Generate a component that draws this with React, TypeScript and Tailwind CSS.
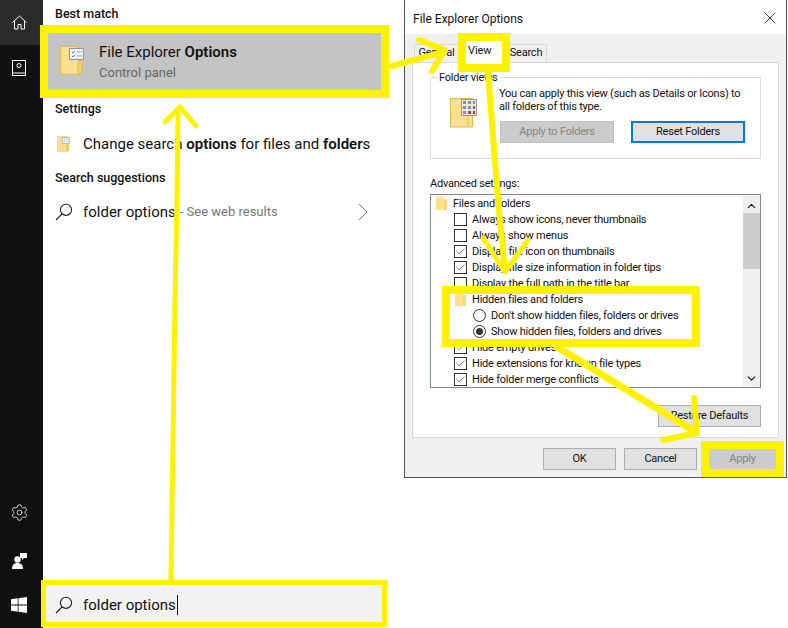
import React from 'react';
import { Check, ChevronDown, ChevronUp, Settings, X } from 'lucide-react';

const FolderTasks = ({ size = 24 }: { size?: number }) => (
  <svg width={size} height={size * 1.2} viewBox="0 0 24 29">
    <path d="M0.5 0.5h18v28h-18z" fill="#fbe08f" stroke="#e3b94f" />
    <path d="M18 17l4-3v14h-4z" fill="#f4cf6c" stroke="#e3b94f" />
    <rect x="9.5" y="2.5" width="14" height="11" fill="#f4f6f8" stroke="#8a929c" />
    <path d="M12 6l1 1 2-2M12 10l1 1 2-2" stroke="#2f7fd0" fill="none" />
    <path d="M17 6h5M17 10h5" stroke="#9aa2aa" />
  </svg>
);

const FolderGrid = () => (
  <svg width="27" height="30" viewBox="0 0 27 30">
    <path d="M0.5 0.5h22v28.5h-22z" fill="#fbe08f" stroke="#e3b94f" />
    <path d="M18 1v28" stroke="#e3b94f" />
    <rect x="11.5" y="1.5" width="15" height="16" fill="#e8e8e8" stroke="#9a9a9a" />
    <path d="M13 3h3v3h-3zM18 3h3v3h-3zM23 3h2v3h-2zM13 8h3v3h-3zM18 8h3v3h-3zM13 13h3v3h-3z" fill="#8c8c9c" />
    <path d="M23 8h2v3h-2zM18 13h3v3h-3z" fill="#a05040" />
    <path d="M23 13h2v3h-2z" fill="#b03030" />
  </svg>
);

const SmallFolder = () => (
  <svg width="11" height="13" viewBox="0 0 11 13">
    <path d="M0 0h7l1 1v1h3v11H0z" fill="#fbe08f" />
    <path d="M8 2v11h3V2z" fill="#f7d67e" />
  </svg>
);

const SearchGlyph = () => (
  <svg width="18" height="18" viewBox="0 0 18 18" fill="none" stroke="#222" strokeWidth="1.1">
    <circle cx="11" cy="6.8" r="5.6" />
    <path d="M7 11L1 17" />
  </svg>
);

const Btn = ({ label, w, disabled = false }: { label: string; w: string; disabled?: boolean }) => (
  <div className={`${w} h-[22px] flex items-center justify-center border ${disabled ? 'bg-[#cccccc] border-[#bfbfbf] text-[#838383]' : 'bg-[#e1e1e1] border-[#adadad] text-[#111]'}`}>
    {label}
  </div>
);

const Box = ({ on, label }: { on: boolean; label: string }) => (
  <div className="h-4 pl-[23px] flex items-center gap-[5px]">
    <div className="w-[13px] h-[13px] border border-[#333] bg-white flex items-center justify-center">
      {on && <Check size={11} strokeWidth={1.3} className="text-[#333]" />}
    </div>
    <span>{label}</span>
  </div>
);

const Radio = ({ on, label }: { on: boolean; label: string }) => (
  <div className="h-4 pl-[42px] flex items-center gap-[5px]">
    <div className="w-[13px] h-[13px] rounded-full border border-[#333] bg-white flex items-center justify-center">
      {on && <div className="w-[7px] h-[7px] rounded-full bg-[#333]" />}
    </div>
    <span>{label}</span>
  </div>
);

export default function App() {
  return (
    <div className="relative w-[788px] h-[628px] overflow-hidden flex bg-white text-[#111] font-['Roboto',sans-serif]">
      {/* Start menu rail */}
      <div className="w-[43px] h-full bg-[#111111] flex flex-col text-white shrink-0">
        <div className="h-[45px] bg-[#2b2b2b] flex items-center justify-center pr-[5px]">
          <svg width="15" height="15" viewBox="0 0 15 15" fill="none" stroke="#fff" strokeWidth="1">
            <path d="M0.5 7.5L7.5 1l7 6.5M2.5 6v8h3.5V9.5h3V14h3.5V6" />
          </svg>
        </div>
        <div className="h-[46px] flex items-center justify-center pr-[5px]">
          <svg width="14" height="16" viewBox="0 0 14 16" fill="none" stroke="#fff" strokeWidth="1">
            <path d="M0.5 0.5h13v15h-13zM0.5 13h13" />
            <circle cx="7" cy="5.5" r="2" />
          </svg>
        </div>
        <div className="flex-1" />
        <div className="h-[50px] flex items-center justify-center pr-[5px] pb-[4px]">
          <Settings size={19} strokeWidth={1} />
        </div>
        <div className="h-[44px] flex items-center justify-center pr-[5px]">
          <svg width="15" height="16" viewBox="0 0 15 16" fill="#fff">
            <circle cx="5.5" cy="6.5" r="3.2" />
            <path d="M0 16c0-4 2-6 5.5-6s5.5 2 5.5 6z" />
            <path d="M8 0h7v5h-3l-2 2V5H8z" />
          </svg>
        </div>
        <div className="h-[45px] flex items-center justify-center pr-[5px] pb-[1px]">
          <svg width="16" height="16" viewBox="0 0 16 16" fill="#fff">
            <path d="M0 2.3L6.7 1.3V7.5H0zM7.5 1.2L16 0V7.5H7.5zM0 8.4H6.7V14.7L0 13.7zM7.5 8.4H16V16L7.5 14.8z" />
          </svg>
        </div>
      </div>

      {/* Search results */}
      <div className="w-[361px] shrink-0 h-full flex flex-col">
        <div className="h-[25px] pl-[12px] pt-[6px] text-[12.5px] font-medium leading-4">Best match</div>
        <div className="relative z-10 -ml-[3px] w-[349px] h-[73px] border-[8px] border-[#fff200] bg-[#c4c4c4] flex items-center pl-[12px] gap-[15px]">
          <div className="-mt-[2px]"><FolderTasks /></div>
          <div className="flex flex-col pt-[2px]">
            <span className="text-[15px] leading-5">File Explorer <b className="font-semibold">Options</b></span>
            <span className="text-[13px] leading-[21px] text-[#666]">Control panel</span>
          </div>
        </div>
        <div className="h-[24px] pl-[12px] -mt-px flex items-center text-[12.5px] font-medium">Settings</div>
        <div className="h-[34px] pl-[14px] mt-[6px] flex items-center gap-[13px] text-[15px]">
          <FolderTasks size={13} />
          <span>Change search <b className="font-semibold">options</b> for files and <b className="font-semibold">folder</b>s</span>
        </div>
        <div className="h-[24px] pl-[12px] mt-[5px] flex items-center text-[12.5px] font-medium">Search suggestions</div>
        <div className="h-[34px] pl-[12px] mt-[5px] flex items-center gap-[10px] pr-[36px]">
          <SearchGlyph />
          <span className="text-[15px]">folder options</span>
          <span className="text-[13px] text-[#777] -ml-[6px]">- See web results</span>
          <svg width="10" height="18" viewBox="0 0 10 18" fill="none" stroke="#777" strokeWidth="1" className="ml-auto">
            <path d="M1 1l8 8-8 8" />
          </svg>
        </div>
        <div className="flex-1" />
        <div className="-ml-[2px] w-[346px] h-[47px] mb-[1px] border-[5px] border-[#fff200] bg-[#f2f2f2] flex items-center pl-[9px] pt-[3px] gap-[10px] text-[15px]">
          <SearchGlyph />
          <span className="border-r border-[#111] pr-px leading-5">folder options</span>
        </div>
      </div>

      {/* Dialog */}
      <div className="w-[383px] h-[478px] shrink-0 border-l border-r border-b border-[#555] bg-[#f0f0f0] flex flex-col text-[11px] tracking-[-0.22px]">
        <div className="h-[34px] bg-white flex items-center justify-between pl-[8px] pr-[6px] pt-[4px]">
          <span className="text-[12px] tracking-normal">File Explorer Options</span>
          <X size={20} strokeWidth={1} className="text-[#222] -mt-[2px]" />
        </div>
        <div className="mx-[7px] mt-[10px] flex h-[18px] pl-[2px]">
          <div className="w-[45px] bg-[#f0f0f0] border border-b-0 border-[#d9d9d9] flex items-center justify-center">General</div>
          <div className="w-[47px] bg-white" />
          <div className="w-[41px] bg-[#f0f0f0] border border-b-0 border-l-0 border-[#d9d9d9] flex items-center justify-center">Search</div>
        </div>
        <div className="mx-[7px] h-[377px] bg-white border border-[#d9d9d9] px-[17px] pt-[14px] flex flex-col">
          <fieldset className="h-[82px] border border-[#dcdcdc] relative">
            <legend className="ml-[6px] px-[2px] leading-[1px]">Folder views</legend>
            <div className="flex pl-[19px] pt-[10px] gap-[22px]">
              <div className="pt-[10px]"><FolderGrid /></div>
              <div className="flex flex-col">
                <p className="leading-[13px] -mt-[1px] whitespace-nowrap">You can apply this view (such as Details or Icons) to<br />all folders of this type.</p>
                <div className="flex gap-[17px] mt-[8px] ml-[1px]">
                  <Btn label="Apply to Folders" w="w-[114px]" disabled />
                  <div className="w-[114px] h-[22px] flex items-center justify-center border-2 border-[#0078d7] bg-[#e1e1e1]">Reset Folders</div>
                </div>
              </div>
            </div>
          </fieldset>
          <div className="mt-[17px] h-[18px] leading-4">Advanced settings:</div>
          <div className="h-[194px] border border-[#828790] flex overflow-hidden">
            <div className="flex-1 pt-px">
              <div className="h-4 pl-[5px] flex items-center gap-[6px]"><SmallFolder /><span>Files and folders</span></div>
              <Box on={false} label="Always show icons, never thumbnails" />
              <Box on={false} label="Always show menus" />
              <Box on label="Display file icon on thumbnails" />
              <Box on label="Display file size information in folder tips" />
              <Box on={false} label="Display the full path in the title bar" />
              <div className="h-4 pl-[24px] flex items-center gap-[6px]"><SmallFolder /><span>Hidden files and folders</span></div>
              <Radio on={false} label="Don't show hidden files, folders or drives" />
              <Radio on label="Show hidden files, folders and drives" />
              <Box on label="Hide empty drives" />
              <Box on label="Hide extensions for known file types" />
              <Box on label="Hide folder merge conflicts" />
            </div>
            <div className="w-[17px] bg-[#f0f0f0] flex flex-col items-center">
              <ChevronUp size={13} strokeWidth={2} className="mt-[4px] h-[14px]" />
              <div className="w-full h-[56px] bg-[#cdcdcd]" />
              <ChevronDown size={13} strokeWidth={2} className="mt-auto mb-[2px]" />
            </div>
          </div>
          <div className="mt-[17px] flex justify-end">
            <Btn label="Restore Defaults" w="w-[103px]" />
          </div>
        </div>
        <div className="flex-1 flex items-center pl-[138px] gap-[8px] pt-[3px]">
          <Btn label="OK" w="w-[73px]" />
          <Btn label="Cancel" w="w-[73px]" />
          <div className="self-end -ml-[4px] w-[83px] h-[36px] border-[8px] border-[#fff200] bg-[#cccccc] text-[#838383] flex items-center justify-center">Apply</div>
        </div>
      </div>

      {/* Annotation frames over the dialog */}
      <div className="absolute left-[458px] top-[33px] w-[52px] h-[39px] border-[8px] border-[#fff200] bg-white text-[11px] tracking-[-0.1px] leading-4 pl-[2px] pt-[2px]">View</div>
      <div className="absolute left-[442px] top-[286px] w-[258px] h-[61px] border-[8px] border-[#fff200]" />

      {/* Annotation arrows */}
      <svg className="absolute inset-0 pointer-events-none" width="788" height="628" fill="none" stroke="#fff200" strokeWidth="5" strokeLinejoin="round" strokeLinecap="round">
        <path d="M178 110L177 200 175 300 171 580" />
        <path d="M165 122L180 107 196 126" />
        <path d="M392 66L443 52" strokeWidth="6" />
        <path d="M419 40L445 50 432 71" strokeWidth="6" />
        <path d="M488 72L498 200 505 270" strokeWidth="6" />
        <path d="M483 238L505 272 528 240" strokeWidth="5" />
        <path d="M557 347L692 430" strokeWidth="7" />
        <path d="M694 398L697 433 663 440" strokeWidth="6" />
      </svg>
    </div>
  );
}
